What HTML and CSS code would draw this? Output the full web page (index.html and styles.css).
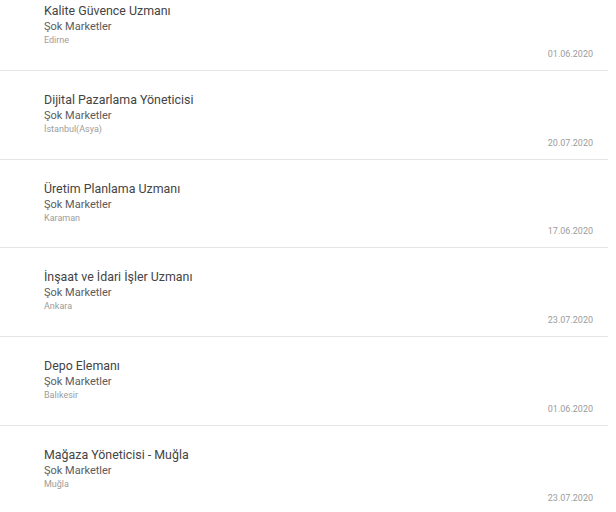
FILE: index.html
```html
<!DOCTYPE html>
<html lang="tr">
<head>
    <meta charset="UTF-8">
    <meta name="viewport" content="width=device-width, initial-scale=1.0">
    <title>İş İlanları | Şok Marketler</title>
    <link rel="stylesheet" href="styles.css">
</head>
<body>
    <ul class="job-list">
        <li class="job">
            <div class="job-info">
                <h3 class="job-title">Kalite Güvence Uzmanı</h3>
                <p class="job-company">Şok Marketler</p>
                <p class="job-city">Edirne</p>
            </div>
            <span class="job-date">01.06.2020</span>
        </li>
        <li class="job">
            <div class="job-info">
                <h3 class="job-title">Dijital Pazarlama Yöneticisi</h3>
                <p class="job-company">Şok Marketler</p>
                <p class="job-city">İstanbul(Asya)</p>
            </div>
            <span class="job-date">20.07.2020</span>
        </li>
        <li class="job">
            <div class="job-info">
                <h3 class="job-title">Üretim Planlama Uzmanı</h3>
                <p class="job-company">Şok Marketler</p>
                <p class="job-city">Karaman</p>
            </div>
            <span class="job-date">17.06.2020</span>
        </li>
        <li class="job">
            <div class="job-info">
                <h3 class="job-title">İnşaat ve İdari İşler Uzmanı</h3>
                <p class="job-company">Şok Marketler</p>
                <p class="job-city">Ankara</p>
            </div>
            <span class="job-date">23.07.2020</span>
        </li>
        <li class="job">
            <div class="job-info">
                <h3 class="job-title">Depo Elemanı</h3>
                <p class="job-company">Şok Marketler</p>
                <p class="job-city">Balıkesir</p>
            </div>
            <span class="job-date">01.06.2020</span>
        </li>
        <li class="job">
            <div class="job-info">
                <h3 class="job-title">Mağaza Yöneticisi - Muğla</h3>
                <p class="job-company">Şok Marketler</p>
                <p class="job-city">Muğla</p>
            </div>
            <span class="job-date">23.07.2020</span>
        </li>
    </ul>
</body>
</html>
```

FILE: styles.css
```css
:root {
    --text-dark: #444;
    --text-mid: #5c5c5c;
    --text-light: #9c9c9c;
    --line: #e6e6e6;
}

* {
    margin: 0;
    padding: 0;
    box-sizing: border-box;
    font-family: Roboto, "Liberation Sans", sans-serif;
}

body {
    background-color: #fff;
    width: 608px;
    overflow: hidden;
}

/* list is scrolled a little, first row is cut off at the top */
.job-list {
    list-style: none;
    margin-top: -18px;
}

.job {
    height: 88.75px;
    display: flex;
    flex-direction: column;
    justify-content: space-between;
    padding: 19px 15px 10px 44px;
    border-bottom: 1px solid var(--line);
}

.job-title {
    font-size: 12.4px;
    font-weight: 400;
    line-height: 19px;
    color: var(--text-dark);
}

.job-company {
    font-size: 11px;
    line-height: 14px;
    color: var(--text-mid);
}

.job-city {
    font-size: 9px;
    line-height: 13px;
    color: var(--text-light);
}

.job-date {
    align-self: flex-end;
    font-size: 9px;
    line-height: 12px;
    color: var(--text-light);
}
```
